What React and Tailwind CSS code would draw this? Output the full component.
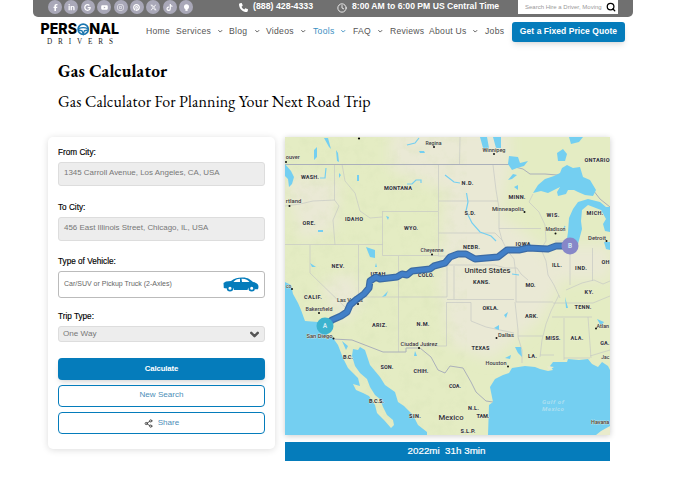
import React from "react";
import { FaFacebookF, FaLinkedinIn, FaGoogle, FaYoutube, FaInstagram, FaPinterest, FaXTwitter, FaTiktok, FaPhone } from "react-icons/fa6";
import { ChevronDown, Clock, Search, Share2 } from "lucide-react";

function Bulb({ className }) {
  return (
    <svg className={className} viewBox="0 0 10 10" fill="currentColor">
      <circle cx="5" cy="3.8" r="3.6" />
      <rect x="3.4" y="7" width="3.2" height="2.8" />
    </svg>
  );
}

const socials = [FaFacebookF, FaLinkedinIn, FaGoogle, FaYoutube, FaInstagram, FaPinterest, FaXTwitter, FaTiktok, Bulb];

function TopBar() {
  return (
    <div className="ml-[33px] flex h-[17px] w-[600px] items-start overflow-hidden rounded-b-[5px] bg-[#707070] text-white">
      <div className="ml-[15px] flex w-[191px] gap-[2.4px]">
        {socials.map((Icon, i) => (
          <span key={i} className="flex size-[14px] shrink-0 items-center justify-center rounded-full bg-[#a9a8b8]">
            <Icon className="size-[7px]" />
          </span>
        ))}
      </div>
      <FaPhone className="mt-[3px] size-[9px]" />
      <span className="ml-[5px] w-[62px] text-[8.8px] leading-[12px] font-bold whitespace-nowrap">(888) 428-4333</span>
      <Clock className="mt-[3px] ml-[22px] size-[10px]" strokeWidth={2} />
      <span className="ml-[5px] w-[148px] text-[8.65px] leading-[12px] font-bold whitespace-nowrap">8:00 AM to 6:00 PM US Central Time</span>
      <div className="ml-[18px] flex h-[14px] w-[100px] items-center bg-white pl-[7px]">
        <span className="w-[77px] overflow-hidden text-[6px] whitespace-nowrap text-[#999]">Search Hire a Driver, Moving</span>
        <Search className="ml-[4px] size-[10px] text-black" strokeWidth={3} />
      </div>
    </div>
  );
}

function Logo() {
  return (
    <svg className="mt-[2px] ml-[40px] h-[26px] w-[80px] shrink-0" viewBox="0 0 80 26">
      <g fontFamily="Inter, sans-serif" fontWeight="800" fontSize="14">
        <text x="0.6" y="12.2" textLength="36.4" lengthAdjust="spacingAndGlyphs">PERS</text>
        <text x="49.2" y="12.2" textLength="30" lengthAdjust="spacingAndGlyphs">NAL</text>
      </g>
      <g fill="none" stroke="#1c77b0" strokeWidth="1.7">
        <circle cx="43.2" cy="7.2" r="5.1" />
        <path d="M38.4 6.6 Q43.2 4.6 48 6.6 M38.6 8 L42 8.8 L43.2 12 L44.4 8.8 L47.8 8" strokeWidth="1.3" />
      </g>
      <text x="7" y="21.6" fontFamily="'Liberation Serif', serif" fontSize="7.2" fill="#222" textLength="66">DRIVERS</text>
    </svg>
  );
}

function NavItem({ label, width, text, arrow, active }) {
  return (
    <div className={"flex shrink-0 items-center whitespace-nowrap " + width + (active ? " text-[#3b8fc2]" : " text-[#555]")}>
      <span className={text}>{label}</span>
      {arrow && <ChevronDown className="size-[6.5px]" strokeWidth={3.5} />}
    </div>
  );
}

function Nav() {
  return (
    <div className="flex h-[33px] items-center">
      <Logo />
      <nav className="mt-[-4px] ml-[26px] flex w-[366px] items-center text-[8.6px] tracking-[0.28px]">
        <NavItem label="Home" width="w-[30px]" text="" />
        <NavItem label="Services" width="w-[53px]" text="w-[41px]" arrow />
        <NavItem label="Blog" width="w-[37px]" text="w-[25px]" arrow />
        <NavItem label="Videos" width="w-[47px]" text="w-[34px]" arrow />
        <NavItem label="Tools" width="w-[40px]" text="w-[27px]" arrow active />
        <NavItem label="FAQ" width="w-[37px]" text="w-[24px]" arrow />
        <NavItem label="Reviews" width="w-[39px]" text="" />
        <NavItem label="About Us" width="w-[56px]" text="w-[43px]" arrow />
        <NavItem label="Jobs" width="w-[27px]" text="" />
      </nav>
      <button className="mt-[-3px] h-[20px] w-[113px] rounded-[3px] bg-[#057cbb] pb-[2px] text-[8.5px] font-bold tracking-[0.06px] whitespace-nowrap text-white shadow-md">
        Get a Fixed Price Quote
      </button>
    </div>
  );
}

function Label({ children }) {
  return <label className="block h-[15px] text-[8.2px] leading-[11px] font-normal text-black [-webkit-text-stroke:0.15px_black]">{children}</label>;
}

function Car() {
  return (
    <svg className="h-[15px] w-[36px]" viewBox="0 0 36 15">
      <path fill="#057cbb" d="M.5 6 L3 4.5 8 4 C12 1 15 .4 20 .5 C25 .6 27 2.5 30 5 C34 5.5 35.5 7 35.5 10 L35 12.2 H32 A4 4 0 0 0 25 11.5 L24.5 13 H11 A4 4 0 0 0 3.5 11.5 L.8 11 Z" />
      <path fill="#fff" d="M10.5 4.7 C13 2.4 15 1.8 17 1.8 V5 H11Z M18.5 1.8 C23 1.7 25 3 26.5 5 H19Z" />
      <g fill="#fff" stroke="#057cbb" strokeWidth="1.7"><circle cx="7" cy="11.3" r="2.4" /><circle cx="28.7" cy="11.3" r="2.4" /></g>
    </svg>
  );
}

function Form() {
  const field = "h-[24px] rounded-[3px] border border-[#ddd] bg-[#ededed] pl-[5px] text-[7.95px] leading-[20px] text-[#777] whitespace-nowrap";
  return (
    <section className="h-[312px] w-[227px] rounded-[5px] bg-white px-[10px] pt-[10px] shadow-[0_1px_7px_rgba(0,0,0,0.14)]">
      <Label>From City:</Label>
      <div className={field}>1345 Carroll Avenue, Los Angeles, CA, USA</div>
      <div className="h-[16px]" />
      <Label>To City:</Label>
      <div className={field}>456 East Illinois Street, Chicago, IL, USA</div>
      <div className="h-[15px]" />
      <Label>Type of Vehicle:</Label>
      <div className="flex h-[27px] items-center justify-between rounded-[3px] border border-[#bbb] pr-[5px] pl-[5px] text-[7px] text-[#666]">
        <span>Car/SUV or Pickup Truck (2-Axles)</span>
        <Car />
      </div>
      <div className="h-[13px]" />
      <Label>Trip Type:</Label>
      <div className="flex h-[16px] items-center justify-between rounded-[3px] border border-[#ddd] bg-[#ededed] pr-[3px] pl-[4px] text-[8.1px] text-[#777]">
        <span>One Way</span>
        <ChevronDown className="size-[13px] text-[#555]" strokeWidth={4.5} />
      </div>
      <div className="mt-[16px] flex flex-col gap-[5px] text-[8.1px]">
        <button className="h-[22px] rounded-[4px] bg-[#057cbb] pb-px text-[7.8px] font-bold tracking-[-0.15px] text-white shadow-md">Calculate</button>
        <button className="h-[22px] rounded-[4px] border border-[#057cbb] pb-px text-[#4d8eb8]">New Search</button>
        <button className="flex h-[22px] items-center justify-center gap-[5px] rounded-[4px] border border-[#057cbb] text-[#4d8eb8]">
          <Share2 className="size-[9px] text-[#444]" strokeWidth={2.4} />
          Share
        </button>
      </div>
    </section>
  );
}

const states = [
  ["WASH.", 310, 179, 18], ["MONTANA", 398, 190, 28], ["ORE.", 309, 225, 13], ["IDAHO", 354, 221, 18],
  ["WYO.", 411, 230, 14], ["N.D.", 467.5, 185, 12], ["S.D.", 470, 215, 11], ["MINN.", 517, 198.5, 17],
  ["WIS.", 553, 217, 13], ["MICH.", 595, 214.5, 17], ["ONTARIO", 597, 161.5, 25], ["NEV.", 338, 268, 13],
  ["UTAH", 378, 276, 15], ["COLO.", 426, 277, 16], ["NEBR.", 471.5, 248.5, 17], ["IOWA", 523, 246.3, 15],
  ["ILL.", 557, 267, 10], ["IND.", 581, 269.5, 12], ["OH", 605.4, 264, 8], ["KANS.", 481.5, 283.5, 17],
  ["MO.", 530.5, 287, 10], ["KY.", 589, 294, 9], ["CALIF.", 313, 298.5, 18], ["ARIZ.", 379.5, 326.5, 15],
  ["N.M.", 423, 325.5, 13], ["OKLA.", 490.5, 310, 16], ["ARK.", 531.5, 317.8, 13], ["TENN.", 583, 309, 17],
  ["MISS.", 553, 340, 15], ["ALA.", 577, 340, 13], ["GA.", 604.8, 344.5, 9], ["TEXAS", 480.5, 349.5, 18],
  ["LA.", 532.5, 358, 9], ["B.C.", 348, 359, 10], ["SON.", 387, 368.7, 13], ["CHIH.", 421, 373, 15],
  ["COA.", 455, 388, 12], ["B.C.S.", 376.5, 402.5, 15], ["SIN.", 415, 417.5, 12], ["N.L.", 473.5, 409.5, 11],
  ["TAM.", 483, 417.5, 13], ["S.L.P.", 468, 433.2, 15],
];

const cities = [
  ["Regina", 433.5, 145, 16, 434, 147], ["Winnipeg", 494, 151.8, 23, 494, 154], ["ouver", 292.8, 159.3, 14, 286, 162],
  ["rtland", 293.5, 203.3, 15.5, 289.5, 206], ["Minneapolis", 508, 211, 32, 524.5, 212], ["Madison", 555.5, 231.3, 20, 555.5, 233.5],
  ["Detroit", 597, 240.3, 18, 606.5, 241], ["Cheyenne", 432, 252.3, 23, 432, 254.5], ["co", 288.5, 288.3, 5, 292, 289],
  ["Las Vegas", 350, 302.3, 26, 358, 304], ["Bakersfield", 319, 311, 27, 319, 313], ["San Diego", 319.5, 338, 26, 333.5, 338.5],
  ["Ciudad Juárez", 419, 346, 37, 419, 348], ["Dallas", 506, 337, 16, 496.5, 338], ["Houston", 496, 365, 21, 508, 366.5],
  ["Atlan", 602.8, 328, 12.5, 596, 328.5], ["Jac", 605.3, 359, 8, 613, 360], ["Havana", 600.2, 424, 18.2, 613, 426],
];

const routePath = "M325 326 L332 320 L341 316 L347 312 L350 305 L357 299 L364 294 L369 288 L370 281 L376 277 L380 279 L397 277 L402 274 L407 275 L412 271 L430 269 L434 266 L445 263 L450 257 L458 254 L466 254 L475 259 L498 257 L507 250 L519 250 L528 248 L548 249 L556 246 L570 246";

function RouteMap() {
  return (
    <svg className="block h-[298px] w-[325px] shadow-[0_1px_6px_rgba(0,0,0,0.2)]" viewBox="285 137 325 298">
      <defs>
        <filter id="soft" x="-20%" y="-20%" width="140%" height="140%"><feGaussianBlur stdDeviation="7" /></filter>
        <filter id="relief">
          <feTurbulence type="fractalNoise" baseFrequency="0.09" numOctaves="4" seed="8" />
          <feColorMatrix values="0 0 0 0 .66  0 0 0 0 .74  0 0 0 0 .46  2.6 0 0 0 -1.15" />
        </filter>
      </defs>
      <rect x="285" y="137" width="325" height="298" fill="#e4ecc3" />
      <g fill="#eae9d5" filter="url(#soft)">
        <path d="M390 130H510V165L500 215L535 240L560 285L540 320L490 360L450 345L440 285L445 190L390 170Z" />
        <path d="M285 175L340 180L335 230L300 240Z M320 285L350 270L365 300L340 325Z" />
        <path d="M545 245H610V280H555Z" />
      </g>
      <path d="M285 137H450V435H285Z" filter="url(#relief)" opacity=".22" />
      <g fill="none" stroke="#c5c9c4" strokeWidth=".7">
        <path d="M334.5 164V200L339 206L333 220L335 245 M285 206L300 204L313 201L335 200 M285 244.5H383 M310 245V273L348 310 M358.5 245V304 M342 164L345 181L355 193L360 211L370 218L382 217 M382.5 211V255.5H438.5V211.5H382.5 M438.5 164V211 M438.5 201H498 M438.5 233H495L503 241 M398.5 256V352 M398 297H447 M358 297H398 M438 256H447 M447 256V297 M447 265H495L505 268H517L521 274L528 280" />
        <path d="M493 165L496 190L499 208V229L502 240L507 250L514 259L516 275V302 M499 228.5H541 M533 194L529 202L539 212L545 225L546 241L541 249L546 261L548 275L554 285L560 298 M555 241H566 M570 249V285 M592.5 248V281 M566 290L582 283L594 280L603 284L610 281 M454 266V299 M447 299.5H514 M447 302.5H471V321L486 327L500 330L514 333 M446.5 302V346H421 M515 302L518 330V337L522 350V363 M518 336H543 M516 302H553 M559 295L551 311L546 324L542 340L540 357 M540 355H554 M552 317H592 M564 318V360 M588 317L591 358 M564 358H590 M553 303H593L610 296 M460 137L459.5 164 M610 350L590 356" />
      </g>
      <g fill="none" stroke="#abb0ba" strokeWidth="1">
        <path d="M285 164.5H509L512 160L515 167L523 169L530 174L545 174L557 175L565 173L580 184L593 190L600 199L610 207" />
        <path d="M333 339L352 340L383 352H406V348H420L431 357L438 370L445 373L450 366L463 368L471 382L476 392L486 401L493 402" />
      </g>
      <g fill="#74cff1">
        <path d="M285 282L291 285L293 294L298 303L301 310L305 321L318 322L325 333L333 338L338 345L343 358L348 368L358 378L360 386L353 384L356 390L363 393L369 396L375 405L377 413L384 420L391 428L394 425L393 420L387 415L383 407L380 399L375 395L370 387L367 379L360 373L355 366L352 356L353 349L358 350L360 347L365 350L370 365L380 377L385 385L395 392L398 402L404 406L413 415L418 425L427 432V435H285Z" />
        <path d="M488 435L489 405L493 402L490 387L495 379L503 375L509 373L512 368L525 366L535 367L540 369L548 371L553 370L550 366L553 362L567 362L568 359L579 360L588 359L592 364L598 367L602 362L608 366L610 370V435Z" />
        <path d="M533 193L538 185L545 179L554 176L560 173L562 168L567 165L573 168L580 167L583 177L590 180L596 190L593 196L585 195L578 192L574 190L568 190L566 194L558 196L557 192L560 187L554 190L548 193L541 191Z" />
        <path d="M568 232L569 218L573 209L578 202L588 199L600 202L606 207L610 207V232L605 231L603 224L606 219L601 210L588 205L582 210L581 221L582 229L578 244L571 244L567 239Z" />
        <path d="M557 153L563 149L567 154L565 161H558Z M509 156L518 157L520 163L528 161L524 166L517 168L512 170L508 164Z M480 137H487L489 148H483Z M493 137H501V148H496Z M508 180L513 174L517 175L512 179Z M514 187L518 185V190Z M571 144L579 142L583 137H569Z M285 164L291 171L294 177L292 184L289 187L288 179L285 176Z M366 247L375 250L375 258L370 257Z M314 150L317 147L317 157L314 160Z M336 150L337 161L339 162L338 153Z M324 138L329 147L331 149L328 138Z M339 173L341 175L339 178Z M357 175H359V181H357Z M386 216L389 217L388 220Z M419 151H424L425 153H420Z M318 230H323V232H318Z M310 263L312 267H316Z M604 242H610V250L606 249Z M376 263L377 267H375Z M505 358L511 355L510 359Z M515 347L521 347L522 357L518 353Z M565 297L568 308H566Z M504 315L508 312L506 318Z M494 328L499 325V330Z M342 341L348 346L346 350Z M415 351L417 356H414Z M382 297L388 291L386 296Z M597 319L604 322L601 326Z" />
      </g>
      <g fill="none" stroke="#74cff1" strokeWidth="1.2">
        <path d="M407 184H412L416 180H421V183 M466.5 193L468 202L466 211L472 223L480 232L491 236L496 241 M445 175L454 182L460 183 M407 145L415 143L419 138 M320 178H325L326 168 M512 274L519 275 M563 231L565 226" />
      </g>
      <path fill="#e9ebcc" d="M596 435L601 431L610 426V435Z M547 366L554 367L549 370Z" />
      <g fontFamily="Roboto, sans-serif" textAnchor="middle" stroke="#f0f1df" strokeWidth=".6" paintOrder="stroke">
        {states.map(([name, x, y, w]) => (
          <text key={name} x={x} y={y} fontSize="5.6" fontWeight="800" fill="#363840" textLength={w}>{name}</text>
        ))}
        {cities.map(([name, x, y, w, dx, dy]) => (
          <g key={name}>
            <text x={x} y={y - 0.3} fontSize="6.2" fontWeight="500" fill="#3a3a3a" textLength={w} lengthAdjust="spacingAndGlyphs">{name}</text>
            <circle cx={dx} cy={dy} r="1" fill="#111" stroke="none" />
          </g>
        ))}
        <text x="487.5" y="273" fontSize="7.8" fontWeight="500" fill="#333" textLength="46" lengthAdjust="spacingAndGlyphs">United States</text>
        <text x="451" y="419.5" fontSize="7.6" fontWeight="500" fill="#333" textLength="25" lengthAdjust="spacingAndGlyphs">Mexico</text>
      </g>
      <path d={routePath} fill="none" stroke="#2e61a1" strokeWidth="7" strokeLinejoin="round" strokeLinecap="round" opacity=".93" />
      <path d={routePath} fill="none" stroke="#4280c8" strokeWidth="4.6" strokeLinejoin="round" strokeLinecap="round" />
      <circle cx="359" cy="138.5" r="1.1" />
      <g fontFamily="Roboto, sans-serif" fontStyle="italic" fontWeight="700" fontSize="6.2" fill="#addff0" textAnchor="middle">
        <text x="553" y="403.5" textLength="22">Gulf of</text>
        <text x="553" y="411.3" textLength="22">Mexico</text>
      </g>
      <circle cx="325" cy="326" r="8.5" fill="#3db3cf" />
      <circle cx="570" cy="246" r="8.5" fill="#8787c8" />
      <g fontFamily="Roboto, sans-serif" fontWeight="700" fontSize="6.5" fill="#d0e9f3" textAnchor="middle">
        <text x="325" y="328.3">A</text>
        <text x="570" y="248.3">B</text>
      </g>
    </svg>
  );
}

export default function App() {
  return (
    <div className="h-[488px] w-[687px] overflow-hidden bg-white font-['Liberation_Sans',Arial,sans-serif]">
      <TopBar />
      <Nav />
      <header className="h-[87px] pt-[10px] pl-[58px] font-['EB_Garamond',Garamond,'Liberation_Serif',serif] text-black">
        <h1 className="text-[17.4px] leading-[22px] font-bold tracking-[0.2px] whitespace-nowrap">Gas Calculator</h1>
        <h2 className="mt-[9px] text-[16px] leading-[22px] tracking-[0.12px] whitespace-nowrap">Gas Calculator For Planning Your Next Road Trip</h2>
      </header>
      <main className="flex gap-[10px] pl-[48px]">
        <Form />
        <section className="w-[325px]">
          <RouteMap />
          <div className="mt-[7px] flex h-[19px] items-center justify-center bg-[#057cbb] pr-[2px] pb-px text-[9.8px] font-normal whitespace-pre text-white [-webkit-text-stroke:0.2px_white]">
            {"2022mi  31h 3min"}
          </div>
        </section>
      </main>
    </div>
  );
}
